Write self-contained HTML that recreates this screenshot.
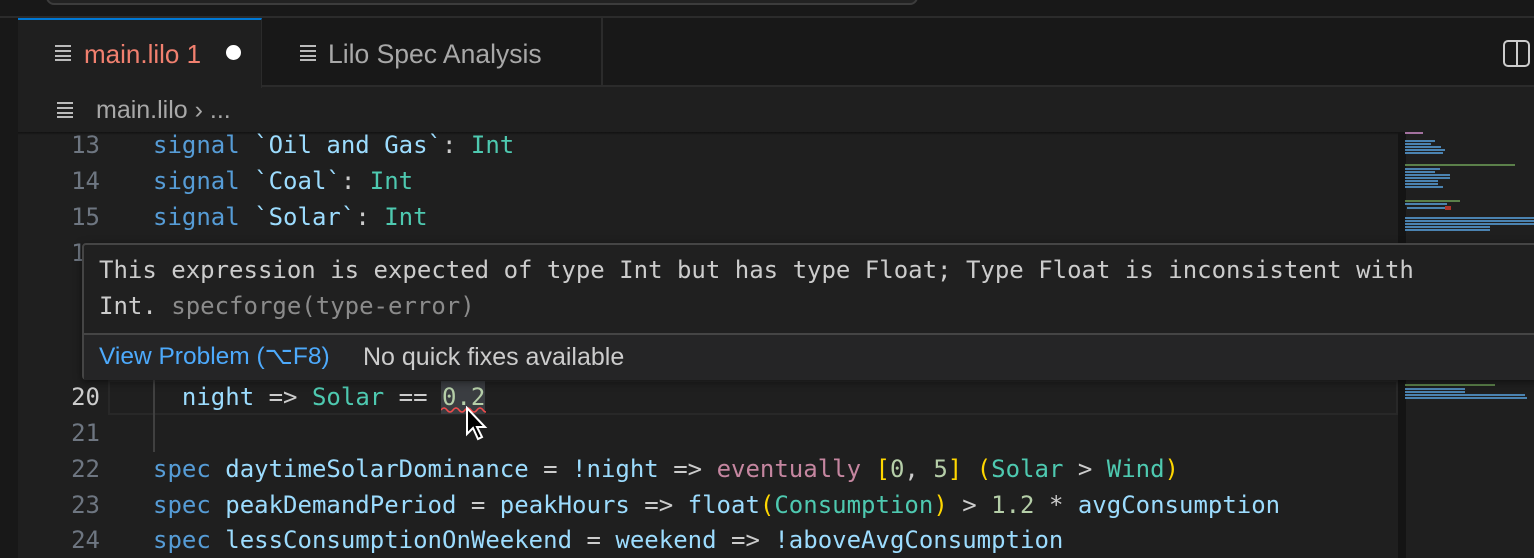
<!DOCTYPE html>
<html><head><meta charset="utf-8"><style>
*{margin:0;padding:0;box-sizing:border-box}
html,body{width:1534px;height:558px;overflow:hidden}
body{background:#1f1f1f;position:relative;font-family:"Liberation Sans",sans-serif}
.abs{position:absolute}
.mono{font-family:"DejaVu Sans Mono","Liberation Mono",monospace;font-size:24px;white-space:pre}
.wrap{position:absolute;left:0;top:0;width:1534px;height:558px;overflow:hidden}
.ln{position:absolute;left:20px;width:80px;text-align:right;color:#6e7681}
.code{position:absolute;left:153px}
.k{color:#569cd6}.t{color:#4ec9b0}.i{color:#9cdcfe}.p{color:#cccccc}.n{color:#b5cea8}.e{color:#c586a0}.b{color:#ffd700}
.ico{position:absolute;width:16px;height:16px;background:linear-gradient(#bbb 0 2px,transparent 2px 5px,#bbb 5px 7px,transparent 7px 10px,#bbb 10px 12px,transparent 12px 14px,#bbb 14px 16px)}
</style></head><body>
<div class="abs" style="left:0;top:0;width:1534px;height:18px;background:#181818"></div>
<div class="abs" style="left:46px;top:-20px;width:872px;height:25px;border:2px solid #3c3c3c;border-radius:8px;background:#222"></div>
<div class="abs" style="left:0;top:16px;width:1534px;height:2px;background:#2b2b2b"></div>
<div class="abs" style="left:0;top:18px;width:18px;height:540px;background:#181818"></div>
<div class="abs" style="left:18px;top:18px;width:1516px;height:69px;background:#181818;border-bottom:2px solid #2b2b2b"></div>
<div class="abs" style="left:18px;top:18px;width:244px;height:70px;background:#1f1f1f;border-top:2px solid #0078d4;border-right:1px solid #2b2b2b"></div>
<div class="ico" style="left:55px;top:45px"></div>
<div class="abs" style="left:84px;top:34px;height:40px;line-height:40px;font-size:26px;color:#f1806f">main.lilo 1</div>
<div class="abs" style="left:226px;top:45px;width:15px;height:15px;border-radius:50%;background:#fff"></div>
<div class="abs" style="left:601px;top:18px;width:2px;height:69px;background:#2b2b2b"></div>
<div class="ico" style="left:300px;top:45px"></div>
<div class="abs" style="left:328px;top:34px;height:40px;line-height:40px;font-size:26.5px;color:#a8a8a8">Lilo Spec Analysis</div>
<div class="abs" style="left:1503px;top:40px;width:27px;height:27px;border:2px solid #ccc;border-radius:5px"><div style="position:absolute;left:11px;top:0;width:2px;height:23px;background:#ccc"></div></div>
<div class="ico" style="left:57px;top:102px"></div>
<div class="abs" style="left:96px;top:92px;height:36px;line-height:36px;font-size:25px;color:#a8a8a8">main.lilo › ...</div>
<div class="abs" style="left:18px;top:132px;width:1380px;height:3px;background:linear-gradient(#111,#1f1f1f)"></div>
<div class="mono wrap">
<div class="ln" style="top:127px;line-height:36px">13</div>
<div class="ln" style="top:163px;line-height:36px">14</div>
<div class="ln" style="top:199px;line-height:36px">15</div>
<div class="ln" style="top:235px;line-height:36px">16</div>
<div class="ln" style="top:379px;line-height:36px;color:#ccc">20</div>
<div class="ln" style="top:415px;line-height:36px">21</div>
<div class="ln" style="top:451px;line-height:36px">22</div>
<div class="ln" style="top:487px;line-height:36px">23</div>
<div class="ln" style="top:523px;line-height:34px">24</div>
<div class="code" style="top:127px;line-height:36px"><span class="k">signal</span> <span class="i">`Oil and Gas`</span><span class="p">:</span> <span class="t">Int</span></div>
<div class="code" style="top:163px;line-height:36px"><span class="k">signal</span> <span class="i">`Coal`</span><span class="p">:</span> <span class="t">Int</span></div>
<div class="code" style="top:199px;line-height:36px"><span class="k">signal</span> <span class="i">`Solar`</span><span class="p">:</span> <span class="t">Int</span></div>
<div class="abs" style="left:108px;top:380px;width:1290px;height:35px;border:2px solid #282828"></div>
<div class="abs" style="left:153px;top:380px;width:2px;height:72px;background:#404040"></div>
<div class="abs" style="left:441px;top:381px;width:44px;height:33px;background:#3a3d41"></div>
<div class="code" style="top:379px;line-height:36px">  <span class="i">night</span> <span class="p">=&gt;</span> <span class="t">Solar</span> <span class="p">==</span> <span class="n">0.2</span></div>
<svg class="abs" style="left:441px;top:405px" width="45" height="8"><path d="M0 5 Q3 1 6 5 T12 5 T18 5 T24 5 T30 5 T36 5 T42 5 T48 5" stroke="#f14c4c" stroke-width="1.5" fill="none"/></svg>
<div class="code" style="top:451px;line-height:36px"><span class="k">spec</span> <span class="i">daytimeSolarDominance</span> <span class="p">=</span> <span class="i">!night</span> <span class="p">=&gt;</span> <span class="e">eventually</span> <span class="b">[</span><span class="n">0</span><span class="p">,</span> <span class="n">5</span><span class="b">]</span> <span class="b">(</span><span class="t">Solar</span> <span class="p">&gt;</span> <span class="t">Wind</span><span class="b">)</span></div>
<div class="code" style="top:487px;line-height:36px"><span class="k">spec</span> <span class="i">peakDemandPeriod</span> <span class="p">=</span> <span class="i">peakHours</span> <span class="p">=&gt;</span> <span class="i">float</span><span class="b">(</span><span class="t">Consumption</span><span class="b">)</span> <span class="p">&gt;</span> <span class="n">1.2</span> <span class="p">*</span> <span class="i">avgConsumption</span></div>
<div class="code" style="top:523px;line-height:34px"><span class="k">spec</span> <span class="i">lessConsumptionOnWeekend</span> <span class="p">=</span> <span class="i">weekend</span> <span class="p">=&gt;</span> <span class="i">!aboveAvgConsumption</span></div>
</div>
<svg class="abs" style="left:465px;top:406px" width="24" height="38"><path d="M2 2 L2 28 L8 22 L13 33 L17 31 L12 21 L20 21 Z" fill="#000" stroke="#fff" stroke-width="2"/></svg>
<div class="abs" style="left:1398px;top:132px;width:136px;height:426px;background:#1f1f1f;border-left:8px solid #141414"></div>
<svg class="abs" style="left:1405px;top:130px" width="129" height="280">
<g fill="#569cd6" opacity="0.8">
<rect x="0" y="2" width="18" height="2" fill="#c586c0"/>
<rect x="0" y="10" width="30" height="2"/><rect x="0" y="13" width="26" height="2"/><rect x="0" y="16" width="36" height="2"/><rect x="0" y="19" width="40" height="2"/><rect x="0" y="22" width="38" height="2"/>
<rect x="0" y="34" width="110" height="2" fill="#6a9955"/>
<rect x="0" y="38" width="35" height="2"/><rect x="0" y="41" width="30" height="2"/><rect x="0" y="44" width="45" height="2"/><rect x="0" y="47" width="45" height="2"/><rect x="0" y="50" width="33" height="2"/><rect x="0" y="53" width="33" height="2"/><rect x="0" y="56" width="38" height="2"/>
<rect x="0" y="70" width="55" height="2" fill="#6a9955"/>
<rect x="0" y="73" width="42" height="2"/><rect x="2" y="77" width="38" height="2"/><rect x="40" y="76" width="6" height="4" fill="#d13b2f"/>
<rect x="0" y="87" width="129" height="2"/><rect x="0" y="90" width="129" height="2"/><rect x="0" y="93" width="129" height="2"/><rect x="0" y="96" width="85" height="2"/><rect x="0" y="99" width="85" height="2"/>
<rect x="0" y="254" width="90" height="2" fill="#6a9955"/>
<rect x="0" y="258" width="60" height="2"/><rect x="0" y="261" width="60" height="2"/><rect x="0" y="264" width="120" height="2"/><rect x="0" y="267" width="122" height="2"/>
</g></svg>
<div class="abs" style="left:82px;top:243px;width:1460px;height:137px;background:#202020;border:2px solid #454545;border-radius:4px;box-shadow:0 2px 8px rgba(0,0,0,.5)">
<div class="mono" style="position:absolute;left:15px;top:7px;line-height:36px;color:#cccccc">This expression is expected of type Int but has type Float; Type Float is inconsistent with
Int. <span style="color:#8b8b8b">specforge(type-error)</span></div>
<div style="position:absolute;left:0;top:88px;width:100%;height:2px;background:#454545"></div>
<div style="position:absolute;left:0;top:90px;width:100%;height:45px;background:#252526"></div>
<div style="position:absolute;left:15px;top:95px;line-height:34px;font-size:24.5px;color:#4daafc">View Problem (⌥F8)</div>
<div style="position:absolute;left:279px;top:95px;line-height:34px;font-size:25px;color:#cccccc">No quick fixes available</div>
</div>
</body></html>
